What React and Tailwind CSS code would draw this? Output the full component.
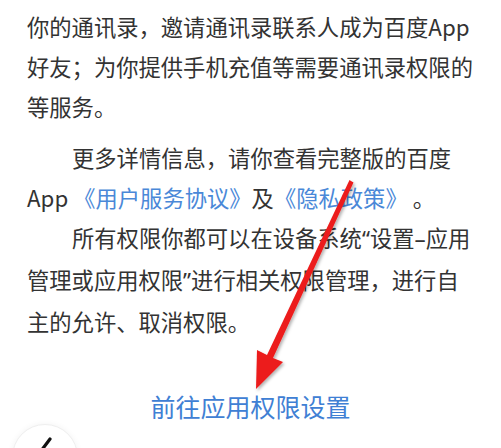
export default function App() {
  const font = { fontFamily: '"Noto Sans CJK SC", "Noto Sans", sans-serif' };
  const latin = { fontFamily: '"Noto Sans", "Liberation Sans", sans-serif' };
  return (
    <div className="relative h-[448px] w-[501px] overflow-hidden bg-white" style={font}>
      <div className="px-[27px] pt-[6px] text-[22.3px] leading-[40px] text-[#333333] [text-spacing-trim:space-all]">
        <p>
          你的通讯录，邀请通讯录联系人成为百度App好友；为你提供手机充值等需要通讯录权限的等服务。
        </p>
        <p className="mt-[11px] indent-[45px]">
          更多详情信息，请你查看完整版的百度App <span className="text-[#4a88d8]">《用户服务协议》</span>及<span className="text-[#4a88d8]">《隐私政策》</span> 。
        </p>
        <p className="indent-[45px]">
          所有权限你都可以在设备系统<span style={latin}>“</span>设置<span style={latin}>–</span>应用管理或应用权限<span style={latin}>”</span>进行相关权限管理，进行自主的允许、取消权限。
        </p>
      </div>

      <div className="mt-[50px] text-center text-[25px] leading-[30px] text-[#3f80d4]">前往应用权限设置</div>

      <div className="ml-[12px] mt-[3px] flex h-[66px] w-[66px] justify-center rounded-full border border-[#efefef] bg-white shadow-[0_0_6px_rgba(0,0,0,0.05)]">
        <svg width="30" height="40" viewBox="0 0 30 40" className="mt-[10px]">
          <path d="M20 4 L8 20 L20 36" fill="none" stroke="#111" strokeWidth="3.2" strokeLinecap="round" strokeLinejoin="round" />
        </svg>
      </div>

      {/* red annotation arrow */}
      <svg className="pointer-events-none absolute left-0 top-0" width="501" height="448" viewBox="0 0 501 448">
        <defs>
          <filter id="sh" x="-20%" y="-20%" width="140%" height="140%">
            <feDropShadow dx="1.5" dy="2" stdDeviation="1.5" floodColor="#000" floodOpacity="0.3" />
          </filter>
        </defs>
        <polygon
          filter="url(#sh)"
          fill="#ec1c1c"
          points="351,181 353.5,182.5 273,358 283,362 256,389 257,350 267,355 349.5,180"
        />
      </svg>
    </div>
  );
}
